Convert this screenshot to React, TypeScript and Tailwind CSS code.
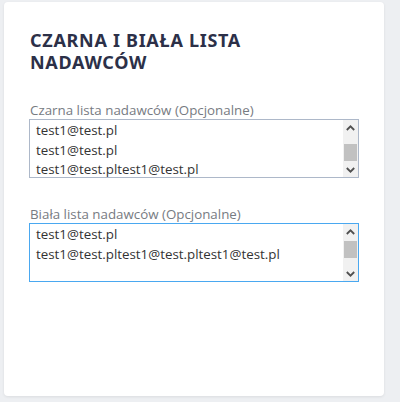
import React, { useEffect, useRef } from "react";

const list1 =
  "test1@test.pl\ntest1@test.pl\ntest1@test.pltest1@test.pl\ntest1@test.pl\ntest1@test.pl\n";
const list2 = "test1@test.pl\ntest1@test.pltest1@test.pltest1@test.pl\n\n\n\n\n";

function Arrow({ up }: { up?: boolean }) {
  return (
    <div className="h-[15px] flex items-center justify-center">
      <svg width="9" height="6" viewBox="0 0 9 6" className={up ? "" : "rotate-180"}>
        <path d="M0.8 5 L4.5 1.3 L8.2 5" fill="none" stroke="#505050" strokeWidth="1.8" />
      </svg>
    </div>
  );
}

function ScrollBar({ thumbTop }: { thumbTop: number }) {
  return (
    <div className="w-[15px] shrink-0 bg-[#f1f1f1] flex flex-col">
      <Arrow up />
      <div className="flex-1 px-[1px]">
        <div className="h-[17px] bg-[#c1c1c1]" style={{ marginTop: thumbTop }} />
      </div>
      <Arrow />
    </div>
  );
}

export default function App() {
  const r2 = useRef<HTMLTextAreaElement>(null);
  useEffect(() => {
    if (r2.current) {
      r2.current.focus();
      r2.current.setSelectionRange(0, 0);
    }
  }, []);
  const font = { fontFamily: '"Open Sans", sans-serif' };
  return (
    <div className="w-[400px] h-[402px] bg-[#edeff2] pt-[2px] pl-[4px]">
      <div className="w-[380px] h-[394px] bg-white rounded-[4px] shadow-[0_1px_3px_rgba(0,0,0,0.08)] px-[25px] pt-[27px]">
        <h2
          className="text-[18px] leading-[22px] font-bold text-[#2c3048] uppercase tracking-[0.7px] pl-[1px]"
          style={{ fontFamily: '"Noto Sans", sans-serif' }}
        >
          Czarna i biała lista
          <br />
          nadawców
        </h2>
        <div className="mt-[28px]" style={font}>
          <label className="block text-[13.33px] leading-[18px] text-[#777b82] pl-[1px]">
            Czarna lista nadawców (Opcjonalne)
          </label>
          <div className="flex h-[59px] border border-[#adb8c9]">
            <textarea
              readOnly
              defaultValue={list1}
              className="flex-1 min-w-0 overflow-hidden text-[13.33px] leading-[19.5px] text-[#333] pl-[6px] pr-[4px] pt-[1px] resize-none outline-none"
              style={font}
            />
            <ScrollBar thumbTop={9} />
          </div>
          <label className="block mt-[27px] text-[13.33px] leading-[18px] text-[#777b82] pl-[1px]">
            Biała lista nadawców (Opcjonalne)
          </label>
          <div className="flex h-[59px] border border-[#4aa8f0]">
            <textarea
              ref={r2}
              defaultValue={list2}
              className="flex-1 min-w-0 overflow-hidden text-[13.33px] leading-[19.5px] text-[#333] pl-[6px] pr-[4px] pt-[1px] resize-none outline-none caret-[#333]"
              style={font}
            />
            <ScrollBar thumbTop={2} />
          </div>
        </div>
      </div>
    </div>
  );
}
